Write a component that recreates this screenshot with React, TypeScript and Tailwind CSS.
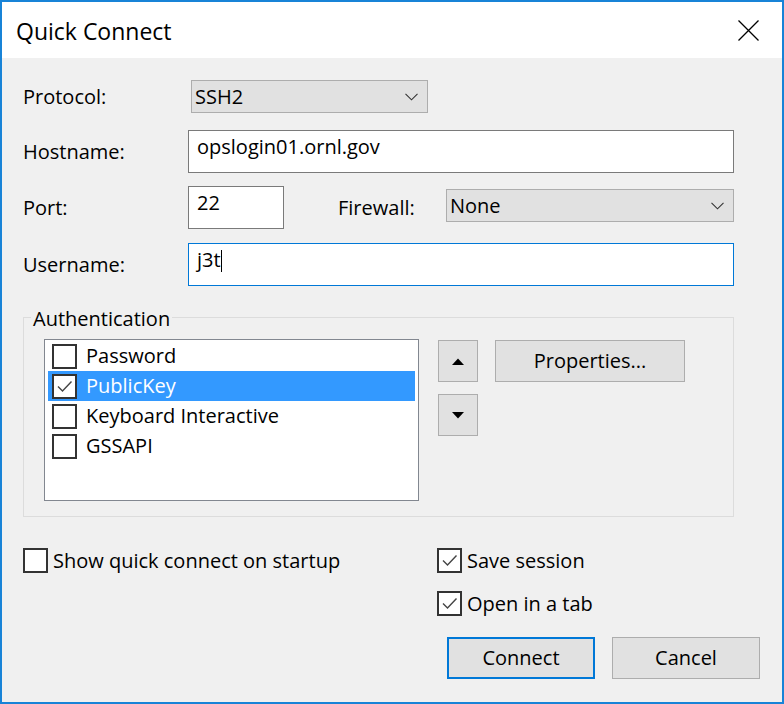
import React from "react";

function Box({ checked }: { checked?: boolean }) {
  return (
    <div className="w-[25px] h-[25px] border-2 border-[#333333] bg-white flex items-center justify-center shrink-0">
      {checked && (
        <svg width="19" height="19" viewBox="0 0 19 19">
          <path d="M3 9.5 L7.5 14 L16.5 4.5" fill="none" stroke="#444" strokeWidth="1.4" />
        </svg>
      )}
    </div>
  );
}

function Chevron() {
  return (
    <svg width="13" height="8" viewBox="0 0 13 8" className="shrink-0">
      <path d="M0.5 0.8 L6.5 6.8 L12.5 0.8" fill="none" stroke="#333" strokeWidth="1.1" />
    </svg>
  );
}

function Combo({ text, className }: { text: string; className: string }) {
  return (
    <div
      className={
        "h-[33px] border border-[#adadad] bg-[#e1e1e1] flex items-center justify-between pl-[3px] pr-[9px] " +
        className
      }
    >
      <span className="leading-[26px]">{text}</span>
      <Chevron />
    </div>
  );
}

export default function App() {
  return (
    <div className="w-[784px] h-[704px] border-2 border-[#1883d7] bg-[#f0f0f0] flex flex-col font-['Open_Sans',sans-serif] text-[20px] text-black overflow-hidden">
      {/* Title bar */}
      <div className="h-[56px] bg-white flex items-center justify-between pl-[14px] pr-[23px] shrink-0">
        <span className="text-[23px] leading-[30px] mt-[2px]">Quick Connect</span>
        <svg width="21" height="21" viewBox="0 0 21 21">
          <path d="M0.5 0.5 L20.5 20.5 M20.5 0.5 L0.5 20.5" stroke="#000" strokeWidth="1.3" />
        </svg>
      </div>

      {/* Body */}
      <div className="flex-1 pl-[21px] pr-[22px] pt-[22px]">
        <div className="w-[711px]">
          {/* Protocol */}
          <div className="flex items-center h-[33px]">
            <span className="w-[168px] leading-[26px]">Protocol:</span>
            <Combo text="SSH2" className="w-[237px]" />
          </div>

          {/* Hostname */}
          <div className="flex items-center h-[43px] mt-[17px]">
            <span className="w-[165px] leading-[26px]">Hostname:</span>
            <div className="flex-1 h-[43px] border border-[#7a7a7a] bg-white pl-[8px] pt-[3px] leading-[26px]">
              opslogin01.ornl.gov
            </div>
          </div>

          {/* Port / Firewall */}
          <div className="flex h-[43px] mt-[13px]">
            <span className="w-[165px] self-center leading-[26px]">Port:</span>
            <div className="w-[96px] h-[43px] border border-[#7a7a7a] bg-white pl-[8px] pt-[3px] leading-[26px]">
              22
            </div>
            <span className="ml-[54px] w-[108px] self-center leading-[26px]">Firewall:</span>
            <Combo text="None" className="flex-1 mt-[3px]" />
          </div>

          {/* Username */}
          <div className="flex items-center h-[43px] mt-[14px]">
            <span className="w-[165px] leading-[26px]">Username:</span>
            <div className="flex-1 h-[43px] border border-[#0078d7] bg-white pl-[8px] pt-[3px] leading-[26px] flex items-start">
              <span>j3t</span>
              <span className="inline-block w-[1px] h-[22px] bg-black mt-[3px]" />
            </div>
          </div>

          {/* Authentication group */}
          <div className="relative mt-[31px] h-[200px] border border-[#dcdcdc] pl-[20px] pt-[21px] flex items-start">
            <span className="absolute left-[7px] top-[-12px] px-[2px] bg-[#f0f0f0] leading-[26px]">
              Authentication
            </span>
            <div className="w-[375px] h-[162px] border border-[#828790] bg-white px-[3px] pt-[1px]">
              {[
                { t: "Password", c: false, s: false },
                { t: "PublicKey", c: true, s: true },
                { t: "Keyboard Interactive", c: false, s: false },
                { t: "GSSAPI", c: false, s: false },
              ].map((r) => (
                <div
                  key={r.t}
                  className={
                    "h-[30px] flex items-center pl-[4px] gap-[9px] " +
                    (r.s ? "bg-[#3399ff] text-white" : "")
                  }
                >
                  <Box checked={r.c} />
                  <span className="leading-[26px]">{r.t}</span>
                </div>
              ))}
            </div>
            <div className="ml-[19px] mt-[1px] flex flex-col gap-[12px]">
              <div className="w-[40px] h-[42px] border border-[#adadad] bg-[#e1e1e1] flex items-center justify-center">
                <svg width="12" height="7" viewBox="0 0 12 7">
                  <path d="M0 7 L6 0.5 L12 7 Z" fill="#000" />
                </svg>
              </div>
              <div className="w-[40px] h-[42px] border border-[#adadad] bg-[#e1e1e1] flex items-center justify-center">
                <svg width="12" height="7" viewBox="0 0 12 7">
                  <path d="M0 0 L12 0 L6 6.5 Z" fill="#000" />
                </svg>
              </div>
            </div>
            <div className="ml-[17px] mt-[1px] w-[190px] h-[42px] border border-[#adadad] bg-[#e1e1e1] flex items-center justify-center leading-[26px]">
              Properties...
            </div>
          </div>
        </div>

        {/* Bottom */}
        <div className="flex mt-[31px]">
          <div className="w-[414px] flex items-center h-[25px] gap-[5px]">
            <Box />
            <span className="leading-[26px]">Show quick connect on startup</span>
          </div>
          <div className="flex flex-col">
            <div className="flex items-center h-[25px] gap-[5px]">
              <Box checked />
              <span className="leading-[26px]">Save session</span>
            </div>
            <div className="flex items-center h-[25px] gap-[5px] mt-[18px]">
              <Box checked />
              <span className="leading-[26px]">Open in a tab</span>
            </div>
            <div className="flex mt-[21px] ml-[10px] gap-[17px]">
              <div className="w-[148px] h-[42px] border-2 border-[#0078d7] bg-[#e1e1e1] flex items-center justify-center leading-[26px]">
                Connect
              </div>
              <div className="w-[148px] h-[42px] border border-[#adadad] bg-[#e1e1e1] flex items-center justify-center leading-[26px]">
                Cancel
              </div>
            </div>
          </div>
        </div>
      </div>
    </div>
  );
}
